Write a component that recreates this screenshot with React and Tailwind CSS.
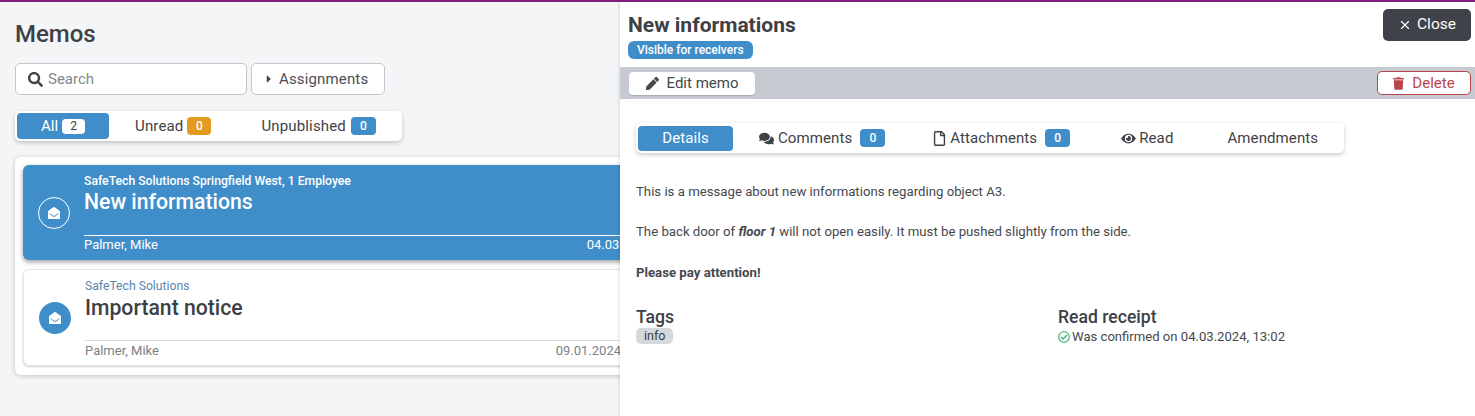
import React from "react";
import { FaSearch, FaCaretRight, FaPen, FaComments, FaRegFile, FaEye, FaTrash, FaEnvelopeOpen, FaRegCheckCircle } from "react-icons/fa";
import { X } from "lucide-react";

const font = { fontFamily: "Roboto, 'Liberation Sans', sans-serif" };

function Badge({ className, children }) {
  return (
    <span className={`inline-flex items-center justify-center h-[18px] rounded-[4px] text-[12px] font-medium ${className}`}>
      {children}
    </span>
  );
}

function MemoCard({ active, org, title, author, date }) {
  return (
    <div
      className={`flex items-stretch rounded-[6px] ${
        active
          ? "h-[95px] bg-[#408ec9] text-white shadow-[0_2px_5px_rgba(0,0,0,0.4)]"
          : "h-[97px] bg-white text-[#3a3d42] border border-[#e3e6e9] shadow-[0_1px_2px_rgba(0,0,0,0.2)]"
      }`}
    >
      <div className="flex items-center justify-center shrink-0 w-[62px]">
        <span
          className={`flex items-center justify-center w-[32px] h-[32px] rounded-full ${
            active ? "border border-white text-white" : "bg-[#408ec9] text-white"
          }`}
        >
          <FaEnvelopeOpen className="w-[12px] h-[12px]" />
        </span>
      </div>
      <div className={`flex-1 flex flex-col min-w-0 -ml-[1px] ${active ? "pr-[15px]" : "pr-[45px]"}`}>
        <div className={`text-[12.2px] leading-[14px] pt-[9px] ${active ? "font-medium" : "text-[#5b87ad]"}`}>{org}</div>
        <div className={`text-[21.2px] leading-[28px] font-medium ${active ? "" : "mt-[1px] text-[#3d4045]"}`}>{title}</div>
        <div
          className={`mt-auto mb-[6px] h-[19px] flex justify-between text-[13px] leading-[16px] border-t ${
            active ? "border-white pt-[1px]" : "border-[#d9dcdf] pt-[2px] text-[#7d8084]"
          }`}
        >
          <span>{author}</span>
          <span>{date}</span>
        </div>
      </div>
    </div>
  );
}

function Tab({ active, icon, label, badge, className }) {
  return (
    <div
      className={`flex items-center justify-center gap-[1px] h-[25px] rounded-[4px] text-[15px] tracking-[0.1px] ${
        active ? "bg-[#408ec9] text-white" : "text-[#3f4247]"
      } ${className}`}
    >
      {icon}
      <span>{label}</span>
      {badge}
    </div>
  );
}

export default function App() {
  return (
    <div style={font} className="relative w-[1475px] h-[416px] overflow-hidden bg-[#f3f5f7] border-t-2 border-[#7b1f7c] text-[#3a3d42]">
      <div className="w-[680px] pt-[16px]">
        <div className="pl-[15px]">
          <h1 className="text-[24px] leading-[32px] font-medium text-[#3d4045]">Memos</h1>
          <div className="flex gap-[4px] mt-[13px]">
            <div className="flex items-center w-[232px] h-[32px] bg-white border border-[#c3c6ca] rounded-[5px] pl-[12px]">
              <FaSearch className="w-[15px] h-[15px] text-[#3f4247]" />
              <span className="ml-[5px] pt-[1px] text-[15px] text-[#85888c]">Search</span>
            </div>
            <div className="flex items-center w-[134px] h-[32px] bg-white border border-[#c3c6ca] rounded-[5px] pl-[12px]">
              <FaCaretRight className="w-[10px] h-[12px] text-[#3f4247]" />
              <span className="ml-[5px] pt-[1px] text-[15px] tracking-[0.15px] text-[#4b4e53]">Assignments</span>
            </div>
          </div>
          <div className="flex items-center w-[387px] h-[30px] mt-[16px] px-[2px] bg-white rounded-[5px] shadow-[0_2px_4px_rgba(0,0,0,0.2)]">
            <div className="flex items-center justify-center gap-[4px] w-[92px] h-[26px] rounded-[4px] bg-[#408ec9] text-white text-[15px]">
              All
              <span className="flex items-center justify-center w-[23px] h-[15px] rounded-[4px] bg-white text-[#3a3d42] text-[12px]">2</span>
            </div>
            <div className="flex items-center gap-[4px] ml-[26px] text-[15px] tracking-[0.15px] text-[#3f4247]">
              Unread
              <Badge className="w-[24px] bg-[#e49a1f] text-white tracking-normal">0</Badge>
            </div>
            <div className="flex items-center gap-[5px] ml-[50px] text-[15px] tracking-[0.15px] text-[#3f4247]">
              Unpublished
              <Badge className="w-[25px] bg-[#408ec9] text-white tracking-normal">0</Badge>
            </div>
          </div>
        </div>
        <div className="ml-[15px] w-[660px] h-[218px] mt-[16px] p-[8px] bg-white rounded-[6px] shadow-[0_1px_5px_rgba(0,0,0,0.2)] flex flex-col gap-[9px]">
          <MemoCard active org="SafeTech Solutions Springfield West, 1 Employee" title="New informations" author="Palmer, Mike" date="04.03.2024" />
          <MemoCard org="SafeTech Solutions" title="Important notice" author="Palmer, Mike" date="09.01.2024" />
        </div>
      </div>

      <aside className="absolute left-[620px] top-0 bottom-0 w-[855px] bg-white shadow-[-1px_0_3px_rgba(0,0,0,0.12)]">
        <div className="flex justify-between h-[65px] pl-[8px] pr-[4px]">
          <div>
            <h2 className="text-[21px] leading-[24px] font-bold text-[#3d4045] mt-[11px]">New informations</h2>
            <span className="inline-flex items-center h-[18px] mt-[4px] px-[9px] rounded-[6px] bg-[#408ec9] text-white text-[12px] font-medium">
              Visible for receivers
            </span>
          </div>
          <button className="flex items-center justify-center gap-[5px] w-[88px] h-[32px] mt-[7px] rounded-[5px] bg-[#3f4249] text-white text-[15.5px]">
            <X className="w-[14px] h-[14px]" strokeWidth={2} />
            Close
          </button>
        </div>

        <div className="flex items-center justify-between h-[32px] pl-[9px] pr-[4px] bg-[#c5cbd0]">
          <div className="flex items-center justify-center gap-[8px] w-[126px] h-[23px] pt-[1px] rounded-[4px] bg-white text-[15px] text-[#45484d] shadow-[0_1px_1px_rgba(0,0,0,0.15)]">
            <FaPen className="w-[13px] h-[13px]" />
            Edit memo
          </div>
          <div className="flex items-center justify-center gap-[8px] w-[94px] h-[24px] pt-[1px] rounded-[5px] bg-white border border-[#b9454a] text-[15px] text-[#b9454a]">
            <FaTrash className="w-[11px] h-[13px]" />
            Delete
          </div>
        </div>

        <div className="ml-[16px] mt-[23px] w-[708px] h-[31px] pl-[2px] flex items-center bg-white rounded-[5px] border-t border-[#f4f5f6] shadow-[0_2px_4px_rgba(0,0,0,0.2)]">
          <Tab active label="Details" className="w-[95px]" />
          <Tab
            icon={<FaComments className="w-[15px] h-[15px] mr-[3px]" />}
            label="Comments"
            badge={<Badge className="w-[25px] ml-[7px] bg-[#408ec9] text-white tracking-normal">0</Badge>}
            className="ml-[26px]"
          />
          <Tab
            icon={<FaRegFile className="w-[13px] h-[15px] mr-[3px]" />}
            label="Attachments"
            badge={<Badge className="w-[25px] ml-[7px] bg-[#408ec9] text-white tracking-normal">0</Badge>}
            className="ml-[48px]"
          />
          <Tab
            icon={<FaEye className="w-[15px] h-[13px] mr-[2px]" />}
            label="Read"
            className="ml-[51px]"
          />
          <Tab label="Amendments" className="ml-[54px]" />
        </div>

        <div className="ml-[16px] mt-[30px] text-[13.2px] leading-[17px] text-[#45484d]">
          <p>This is a message about new informations regarding object A3.</p>
          <p className="mt-[23px]">
            The back door of <b className="italic font-bold">floor 1</b> will not open easily. It must be pushed slightly from the side.
          </p>
          <p className="mt-[24px] font-bold">Please pay attention!</p>
        </div>

        <div className="flex ml-[16px] mt-[25px]">
          <div className="w-[422px]">
            <h3 className="text-[17.6px] leading-[22px] font-medium text-[#3d4045]">Tags</h3>
            <span className="block w-fit h-[16px] leading-[16px] px-[8px] rounded-[5px] bg-[#d5d8dd] text-[12.5px] text-[#3a3d42]">info</span>
          </div>
          <div>
            <h3 className="text-[17.6px] leading-[22px] font-medium text-[#3d4045]">Read receipt</h3>
            <div className="flex items-center gap-[2px] text-[13.1px] leading-[16px] mt-[1px] text-[#45484d]">
              <FaRegCheckCircle className="w-[12px] h-[12px] text-[#3fae6a]" />
              Was confirmed on 04.03.2024, 13:02
            </div>
          </div>
        </div>
      </aside>
    </div>
  );
}
